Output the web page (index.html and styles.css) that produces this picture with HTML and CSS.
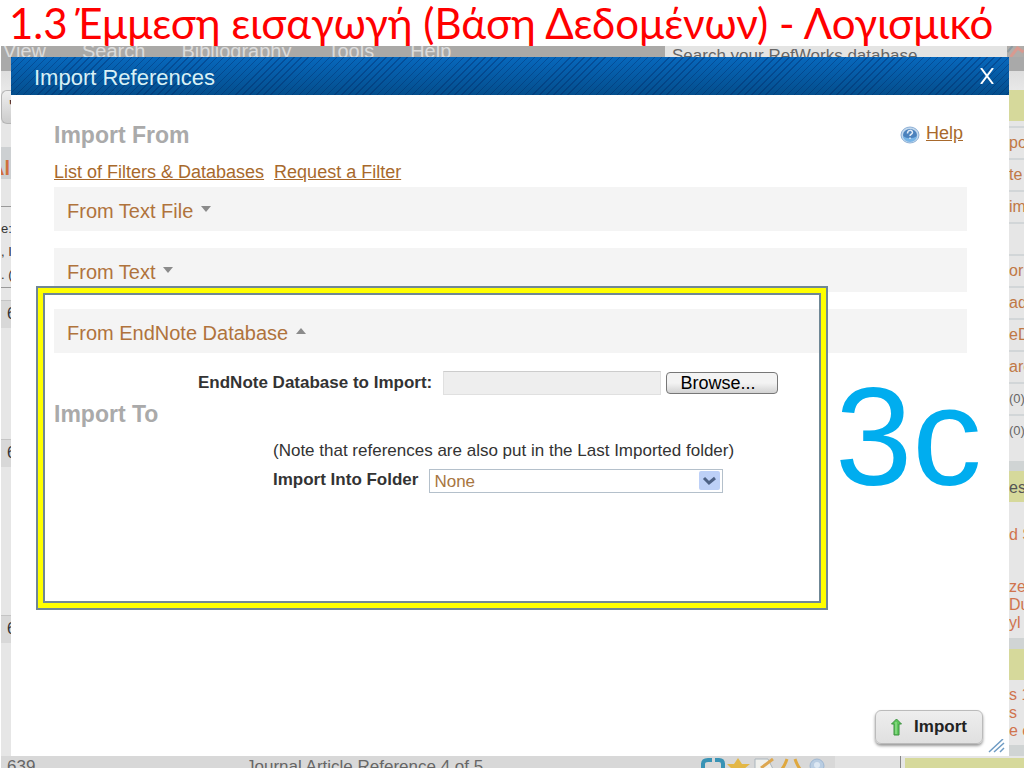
FILE: index.html
```
<!DOCTYPE html>
<html lang="el">
<head>
    <meta charset="UTF-8">
    <meta name="viewport" content="width=device-width, initial-scale=1.0">
    <title>1.3 Έμμεση εισαγωγή - Import References</title>
    <link rel="stylesheet" href="styles.css">
</head>
<body>
    <h1 class="slide-title">1.3 Έμμεση εισαγωγή (Βάση Δεδομένων) - Λογισμικό</h1>

    <div class="app" lang="en">
        <!-- Main menu, mostly hidden by the dialog -->
        <div class="menubar">
            <nav class="menu">
                <span>View</span>
                <span>Search</span>
                <span>Bibliography</span>
                <span>Tools</span>
                <span>Help</span>
            </nav>
            <div class="search">Search your RefWorks database</div>
            <svg class="search-go" viewBox="0 0 16 11"><rect width="16" height="11" fill="#b0adaa"/><path d="M3 11L10 2l6 4" stroke="#d99a90" stroke-width="3" fill="none"/><path d="M0 6l5-6" stroke="#8f9aa0" stroke-width="2"/></svg>
        </div>

        <div class="middle">
            <div class="edge edge-left">
                <div class="toolbar-end"></div>
                <div class="tab-button">'</div>
                <div class="heading-strip">Al</div>
                <div class="spacer"></div>
                <div class="filters">
                    <div>e:</div>
                    <div>, I</div>
                    <div>. (</div>
                </div>
                <div class="record first">6</div>
                <div class="record second">6</div>
                <div class="record third">6</div>
            </div>

            <section class="dialog" role="dialog" aria-labelledby="dialog-title">
                <header class="dialog-header">
                    <h2 id="dialog-title">Import References</h2>
                    <button class="close" type="button" aria-label="Close">
                        <svg viewBox="0 0 16 16" width="16" height="16"><path d="M2 0L14 16M14 0L2 16" stroke="#fff" stroke-width="2"/></svg>
                    </button>
                </header>

                <form class="dialog-body">
                    <div class="title-row">
                        <h3>Import From</h3>
                        <div class="help">
                            <svg width="20" height="18" viewBox="0 0 20 18"><ellipse cx="10" cy="9" rx="9" ry="8" fill="#c3d9ee" stroke="#8fb1d6"/><ellipse cx="10" cy="9" rx="7" ry="6" fill="#4b82bd"/><path d="M3 10a7 6 0 0 0 14 0c-4 3-10 3-14 0z" fill="#77b4e6"/><path d="M7.500 7.500c0-4 5-4 5-1 0 2-2.500 1.500-2.500 3.500M10 11.500v1.500" stroke="#dfeaf6" stroke-width="1.500" fill="none"/></svg>
                            <a href="#">Help</a>
                        </div>
                    </div>
                    <div class="links">
                        <a href="#">List of Filters &amp; Databases</a>
                        <a href="#">Request a Filter</a>
                    </div>

                    <div class="sections">
                        <button class="section" type="button">From Text File <span class="arrow down"></span></button>
                        <button class="section" type="button">From Text <span class="arrow down"></span></button>
                        <button class="section" type="button">From EndNote Database <span class="arrow up"></span></button>
                    </div>

                    <div class="file-row">
                        <label for="database">EndNote Database to Import:</label>
                        <input id="database" type="text" readonly>
                        <button class="browse" type="button">Browse...</button>
                    </div>

                    <h3>Import To</h3>
                    <div class="destination">
                        <p>(Note that references are also put in the Last Imported folder)</p>
                        <div class="folder-row">
                            <label for="folder">Import Into Folder</label>
                            <div class="select-wrap">
                                <select id="folder"><option>None</option></select>
                                <svg class="select-arrow" width="21" height="19" viewBox="0 0 21 19"><rect width="21" height="19" rx="2" fill="#bdd0f7"/><path d="M5 7l5 5 6-5" stroke="#4d6185" stroke-width="3" fill="none"/></svg>
                            </div>
                        </div>
                    </div>

                    <div class="actions">
                        <button class="import" type="submit">
                            <svg width="11" height="18" viewBox="0 0 11 18"><path d="M5.500 1L10.500 6H8v11H3V6H.5z" fill="#5cc75a" stroke="#3c9140"/><path d="M5 4v12" stroke="#a5e6a0"/></svg>
                            Import
                        </button>
                    </div>
                </form>
                <svg class="grip" width="18" height="14" viewBox="0 0 18 14"><path d="M1 13L15 0M6 13L16 4M12 13l4-4" stroke="#6f9cc4" stroke-width="1.500"/></svg>

                <div class="highlight"></div>
                <div class="step">3c</div>
            </section>

            <div class="edge edge-right">
                <div class="toolbar-end"></div>
                <div class="panel-head"></div>
                <ul class="quick">
                    <li>po</li>
                    <li>te</li>
                    <li>im</li>
                    <li></li>
                    <li>or</li>
                    <li>ad</li>
                    <li>eD</li>
                    <li>are</li>
                    <li class="count">(0)</li>
                    <li class="count">(0)</li>
                </ul>
                <div class="panel-head resources">es</div>
                <div class="panel-text">
                    <p>d S</p>
                    <p>ze<br>Du<br>yl</p>
                </div>
                <div class="panel-head"></div>
                <div class="panel-text notes">s 1<br>s<br>e e</div>
            </div>
        </div>

        <!-- Next record of the list below the dialog -->
        <div class="record-row">
            <span class="record-id">639</span>
            <span class="record-title">Journal Article Reference 4 of 5</span>
            <svg class="record-icons" width="130" height="11" viewBox="0 0 130 11">
                <path d="M4 11V6q0-4 5-4h4M16 2h4q4 0 4 4v5" stroke="#3993b5" stroke-width="4" fill="none"/>
                <path d="M39 0l4 6h8l-6 5H33l-5-5h7z" fill="#e3b746"/>
                <path d="M56 11V1h13l5 10z" fill="#f0f0ec" stroke="#aab5bd"/><path d="M62 10L74 1" stroke="#dda750" stroke-width="3"/>
                <path d="M88 1q-2 6-5 10M96 1q2 6 5 10" stroke="#dfa83f" stroke-width="3" fill="none"/>
                <circle cx="118" cy="8" r="7" fill="#b9cde2" stroke="#9fb7d2"/><circle cx="118" cy="7" r="3" fill="#dce7f2"/>
            </svg>
            <div class="record-gap"></div>
            <div class="record-panel"></div>
        </div>
    </div>
</body>
</html>
```

FILE: styles.css
```
* {
    box-sizing: border-box;
}
body {
    margin: 0;
    min-height: 100vh;
    display: flex;
    flex-direction: column;
    font-family: "Liberation Sans", Arial, sans-serif;
    font-size: 17px;
    color: #333;
    background-color: #fff;
}
h2, h3, p, ul {
    margin: 0;
    padding: 0;
}
button, input, select {
    font-family: inherit;
}
a {
    color: #a8692c;
}
.slide-title {
    margin: 0;
    padding-left: 9px;
    height: 46px;
    line-height: 46px;
    font-family: Lato, "Open Sans", sans-serif;
    font-size: 42px;
    font-weight: 400;
    white-space: nowrap;
    overflow: hidden;
    color: #f00;
}

/* Dimmed application behind the dialog */
.app {
    flex: 1;
    display: flex;
    flex-direction: column;
    padding-left: 1px;
    background-color: #e6e6e6;
    background-clip: content-box;
}
.menubar {
    display: flex;
    height: 11px;
    overflow: hidden;
    background-color: #aaa9a7;
    color: #dcdcdc;
}
.menu {
    flex: 1;
    display: flex;
    gap: 36px;
    padding-left: 2px;
    font-size: 20px;
    line-height: 10px;
}
.search {
    width: 342px;
    padding-left: 7px;
    font-size: 17px;
    line-height: 20px;
    background-color: #e4e4e3;
    color: #666;
}
.search-go {
    width: 17px;
    height: 11px;
}
.middle {
    flex: 1;
    display: grid;
    grid-template-columns: 10px 1fr 15px;
}
.edge {
    overflow: hidden;
    white-space: nowrap;
    font-size: 16px;
    background-color: #e6e6e6;
}
.toolbar-end {
    height: 33px;
    background: linear-gradient(#a9a9a9 14px, #dedede 14px, #e8e8e8);
}
.tab-button {
    height: 34px;
    padding-left: 7px;
    line-height: 32px;
    font-weight: bold;
    border: 1px solid #b5b5b5;
    border-right: 0;
    border-radius: 6px 0 0 6px;
    background: linear-gradient(#eee, #ccc);
}
.heading-strip {
    height: 32px;
    margin-top: 23px;
    line-height: 42px;
    font-size: 20px;
    font-weight: bold;
    text-indent: -11px;
    color: #d0703c;
    background-color: #cdd0d2;
}
.spacer {
    height: 28px;
    border-bottom: 1px solid #999;
}
.filters {
    height: 81px;
    padding-top: 10px;
    font-size: 13px;
    line-height: 23px;
    border-bottom: 1px solid #999;
}
.record {
    height: 28px;
    padding-left: 6px;
    line-height: 26px;
    border-top: 1px solid #c4c4c4;
    background-color: #d8d8d8;
}
.record.first {
    margin-top: 12px;
}
.record.second {
    margin-top: 111px;
}
.record.third {
    margin-top: 148px;
}
.edge-right {
    color: #c07845;
}
.panel-head {
    height: 31px;
    background-color: #d6d99b;
}
.panel-head.resources {
    line-height: 34px;
    color: #555;
}
.quick {
    height: 350px;
    padding-top: 5px;
    list-style: none;
    border-bottom: 10px solid #d0d4d4;
}
.quick li {
    height: 32px;
    line-height: 30px;
    border-top: 2px solid #d2d6d8;
}
.quick .count {
    font-size: 13px;
    color: #666;
}
.panel-text {
    height: 147px;
    padding-top: 24px;
    line-height: 18px;
    border-bottom: 11px solid #d0d4d4;
    color: #d0744d;
}
.panel-text p {
    margin-bottom: 34px;
}
.panel-text.notes {
    height: 76px;
    padding-top: 6px;
}

/* Import dialog */
.dialog {
    position: relative;
    display: flex;
    flex-direction: column;
    background-color: #fff;
}
.dialog-header {
    display: flex;
    justify-content: space-between;
    align-items: center;
    height: 38px;
    padding: 0 14px 0 23px;
    color: #d8f0f5;
    background:
        repeating-linear-gradient(135deg, rgba(0, 35, 95, 0.35) 0 1px, transparent 1px 5px),
        linear-gradient(#0768bd, #044e8c);
}
.dialog-header h2 {
    padding-top: 4px;
    font-size: 22px;
    font-weight: 400;
}
.close {
    display: flex;
    padding: 0;
    border: 0;
    background: none;
    cursor: pointer;
}
.dialog-body {
    flex: 1;
    display: flex;
    flex-direction: column;
    padding: 26px 42px 0 43px;
}
h3 {
    font-size: 23px;
    line-height: 28px;
    color: #aaa;
}
.title-row {
    display: flex;
    justify-content: space-between;
}
.help {
    display: flex;
    align-items: center;
    gap: 6px;
    padding-right: 4px;
    font-size: 18px;
}
.help a {
    margin-bottom: 3px;
}
.links {
    display: flex;
    gap: 10px;
    margin-top: 12px;
    font-size: 18px;
    line-height: 22px;
}
.sections {
    display: flex;
    flex-direction: column;
    gap: 17px;
    margin-top: 4px;
}
.section {
    height: 44px;
    padding: 5px 13px 0;
    border: 0;
    text-align: left;
    font-size: 20px;
    color: #b0733c;
    background-color: #f4f4f4;
    cursor: pointer;
}
.arrow {
    display: inline-block;
    vertical-align: 6px;
    margin-left: 2px;
    border: 5px solid transparent;
}
.arrow.down {
    border-top: 6px solid #8b8b8b;
    border-bottom: 0;
}
.arrow.up {
    border-bottom: 6px solid #8b8b8b;
    border-top: 0;
}
label {
    font-weight: bold;
}
.file-row {
    display: flex;
    align-items: center;
    margin-top: 18px;
    padding-left: 144px;
}
.file-row label {
    width: 245px;
}
.file-row input {
    width: 218px;
    height: 24px;
    margin-right: 5px;
    border: 1px solid #e0e0e0;
    border-top-color: #ccc;
    background-color: #eee;
}
.browse {
    width: 112px;
    height: 22px;
    padding: 0 8px 0 0;
    font-size: 18px;
    line-height: 20px;
    border: 1px solid #777;
    border-radius: 4px;
    background: linear-gradient(#f3f3f3 50%, #d2d2d2);
}
.file-row + h3 {
    margin-top: 5px;
}
.destination {
    padding: 12px 0 0 219px;
}
.destination p {
    line-height: 22px;
    white-space: nowrap;
}
.folder-row {
    display: flex;
    gap: 11px;
    margin-top: 7px;
}
.folder-row label {
    line-height: 22px;
}
.select-wrap {
    position: relative;
    width: 294px;
}
.select-wrap select {
    appearance: none;
    width: 100%;
    height: 24px;
    padding: 0 24px 0 4px;
    font-size: 17px;
    color: #a8763f;
    border: 1px solid #b4c0cb;
    border-radius: 0;
    background-color: #fff;
}
.select-arrow {
    position: absolute;
    top: 2px;
    right: 3px;
    pointer-events: none;
}
.actions {
    display: flex;
    justify-content: flex-end;
    margin: auto -16px 12px 0;
}
.import {
    display: flex;
    align-items: center;
    justify-content: center;
    gap: 12px;
    width: 108px;
    height: 34px;
    font-size: 17px;
    font-weight: bold;
    color: #222;
    border: 1px solid #bbb;
    border-radius: 6px;
    background: linear-gradient(#eee, #e0e0e0);
    box-shadow: 0 2px 3px #999;
    cursor: pointer;
}
.grip {
    position: absolute;
    right: 3px;
    bottom: 3px;
}

/* Annotations drawn over the dialog */
.highlight {
    position: absolute;
    top: 229px;
    left: 25px;
    width: 792px;
    height: 324px;
    border: 2px solid #6f8795;
    outline: 2px solid #6f8795;
    outline-offset: -9px;
    box-shadow: inset 0 0 0 6px #ff0;
    pointer-events: none;
}
.step {
    position: absolute;
    top: 308px;
    left: 824px;
    font-size: 139px;
    line-height: 144px;
    color: #00adef;
}

.record-row {
    display: flex;
    height: 13px;
    overflow: hidden;
    padding-left: 6px;
    font-size: 17px;
    line-height: 22px;
    color: #666;
    background-color: #d8d8d8;
}
.record-id {
    width: 239px;
}
.record-title {
    flex: 1;
}
.record-icons {
    margin: 2px 6px 0 0;
}
.record-gap {
    width: 66px;
    background-color: #e2e2e2;
    border-right: 1px solid #888;
}
.record-panel {
    width: 123px;
    border: solid #e6e6e6;
    border-width: 2px 0 0 4px;
    background-color: #d6d99b;
}
```
